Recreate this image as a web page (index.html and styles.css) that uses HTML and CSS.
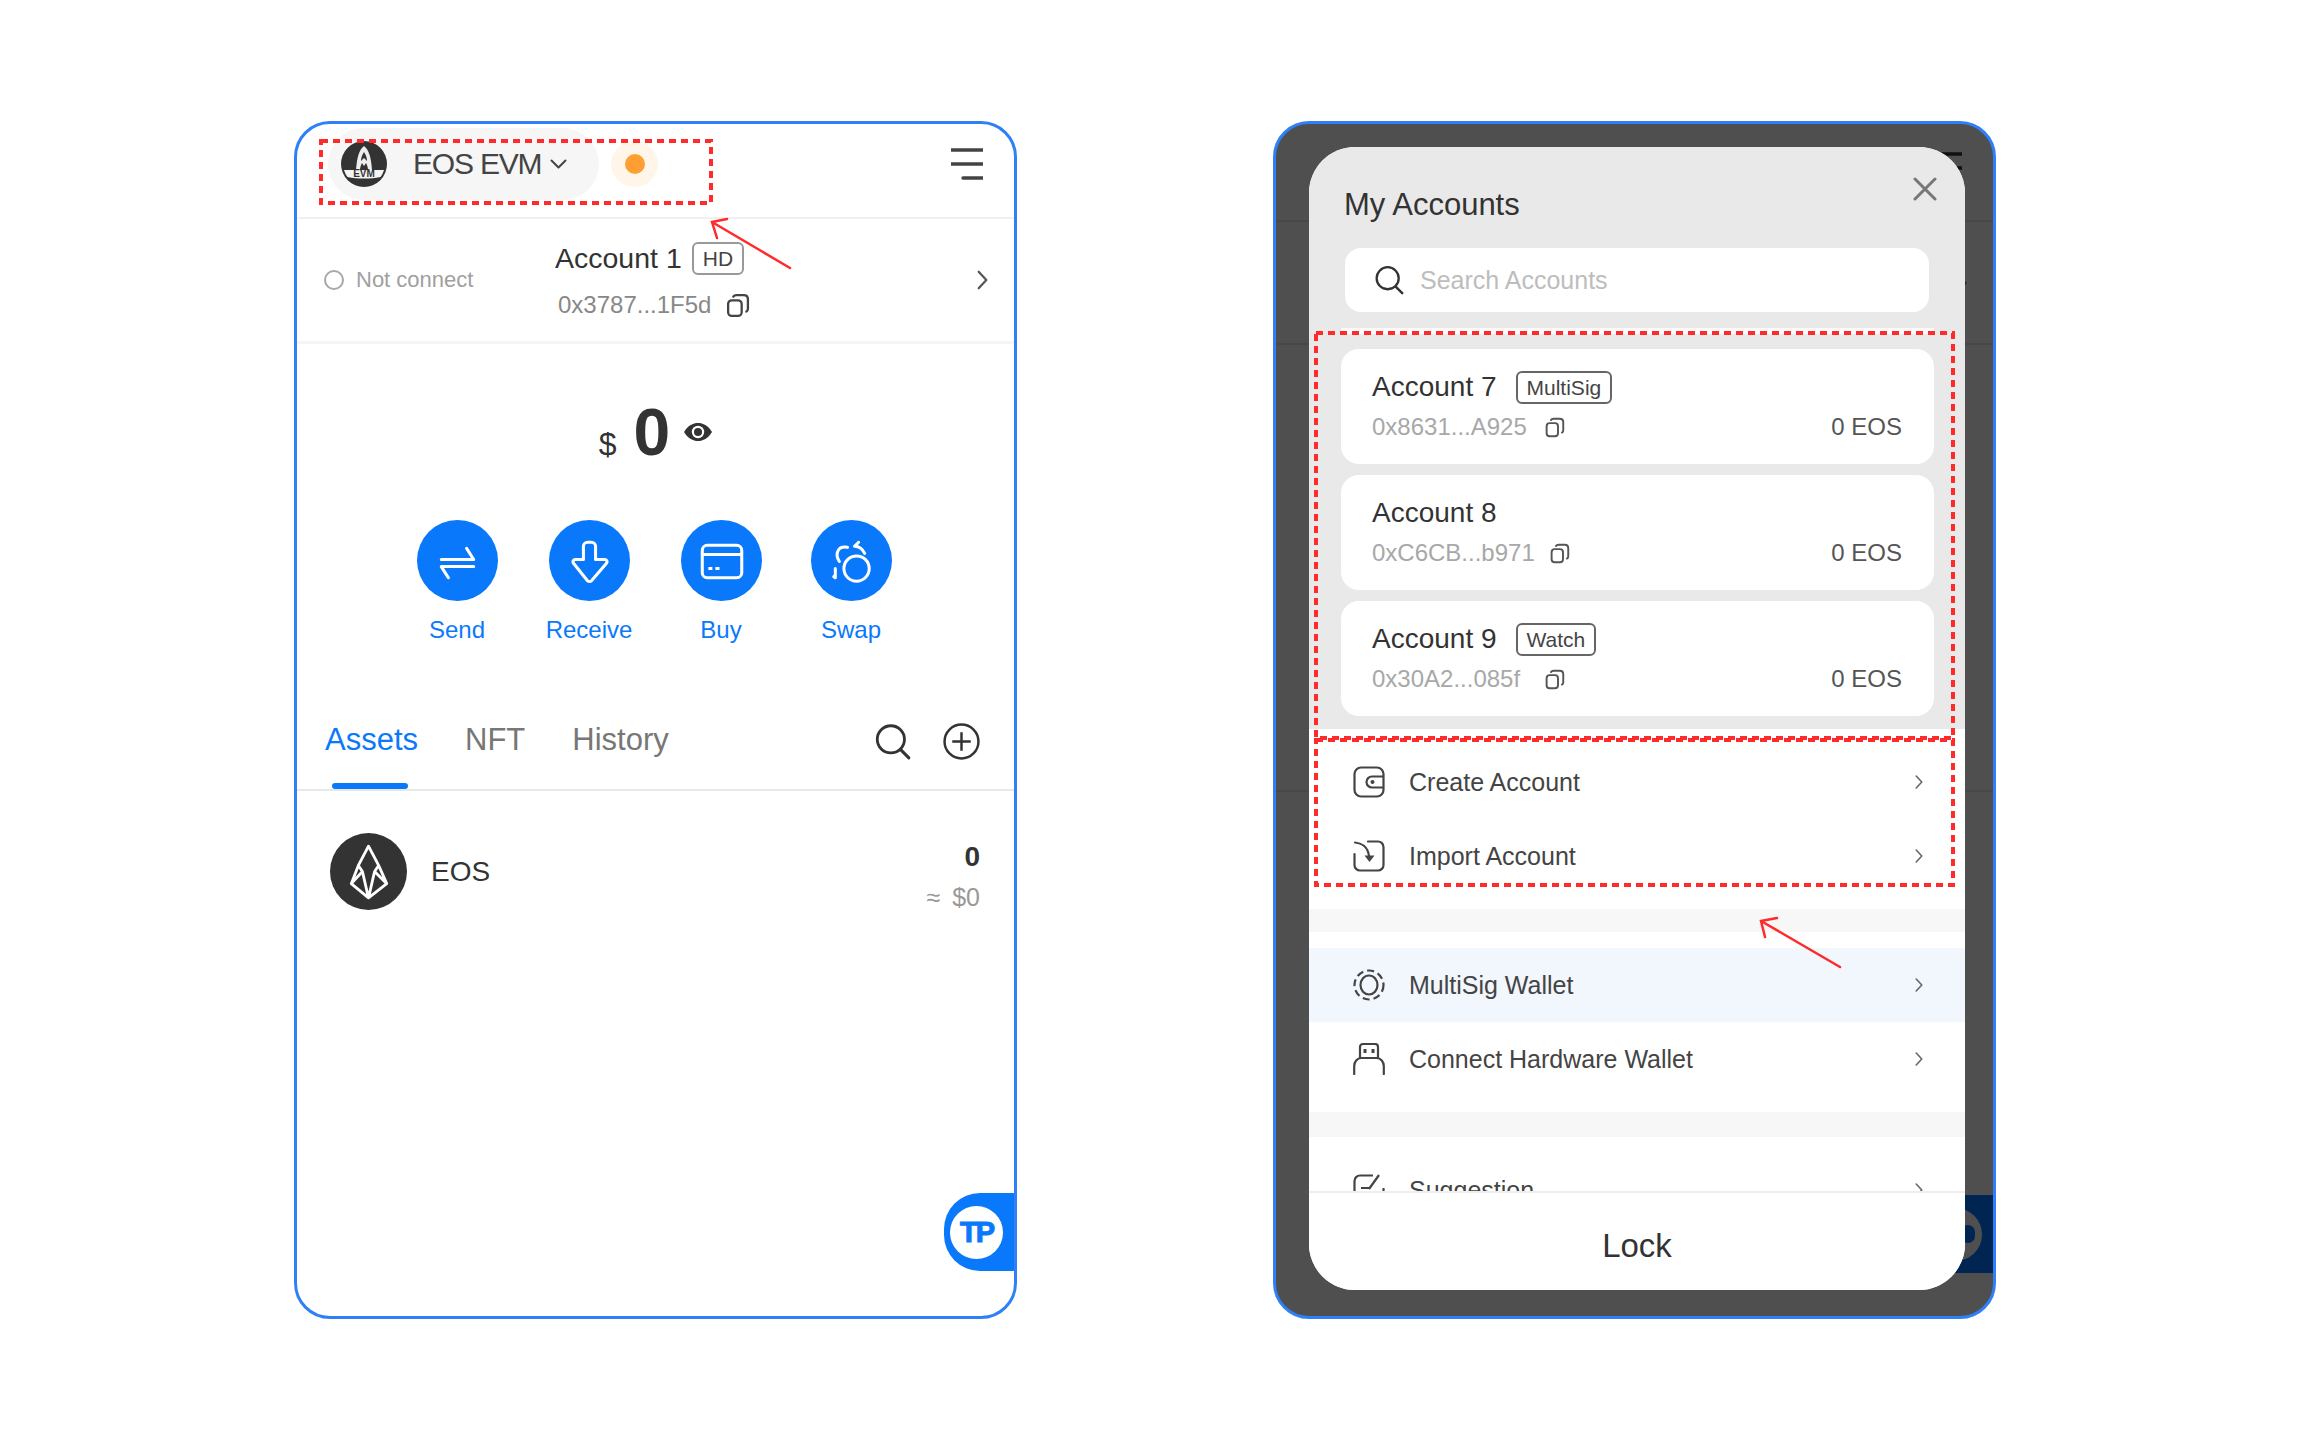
FILE: index.html
```html
<!DOCTYPE html>
<html lang="en">
<head>
  <meta charset="UTF-8">
  <title>EOS EVM wallet</title>
  <link rel="stylesheet" href="styles.css">
</head>
<body>
  <svg class="sprites" width="0" height="0">
    <symbol id="i-copy" viewBox="0 0 24 24">
      <rect x="3" y="7" width="13" height="15" rx="3.5" fill="none" stroke="currentColor" stroke-width="2.2"/>
      <path d="M8 3.5C8.6 2.4 9.6 2 11 2h7c2.4 0 4 1.6 4 4v9c0 1.2-.5 2.2-1.5 2.8" fill="none" stroke="currentColor" stroke-width="2.2" stroke-linecap="round"/>
    </symbol>
    <symbol id="i-chev" viewBox="0 0 10 18">
      <path d="M1.5 1.5 8.5 9l-7 7.5" fill="none" stroke="currentColor" stroke-width="2" stroke-linecap="round" stroke-linejoin="round"/>
    </symbol>
    <symbol id="i-search" viewBox="0 0 34 34">
      <circle cx="15.5" cy="15" r="12.5" fill="none" stroke="currentColor" stroke-width="2.6"/>
      <path d="M24.5 24.5 32 32" fill="none" stroke="currentColor" stroke-width="2.8" stroke-linecap="round"/>
    </symbol>
  </svg>

  <div class="page">
    <!-- wallet home -->
    <div class="phone">
      <div class="topbar">
        <div class="chain-pill">
          <svg class="chain-logo" viewBox="0 0 46 46">
            <circle cx="23" cy="23" r="23" fill="#333"/>
            <path d="M3 29h40c-1 3-2 5-3.500 7-5 1-11 1.500-16.500 1.500S11 37 6.500 36C5 34 4 32 3 29z" fill="#f4f4f4"/>
            <path d="M23 5c5 4 7 11 8 24H15c1-13 3-20 8-24z" fill="#eee"/>
            <path d="M23 11c2 3 3 6 3 9l-3-3-3 3c0-3 1-6 3-9zM19 29c0-3 1-5 2-7l2 3 2-3c1 2 2 4 2 7z" fill="#333"/>
            <text x="23" y="36" text-anchor="middle" class="chain-logo-text">EVM</text>
          </svg>
          <span class="chain-name">EOS EVM</span>
          <svg class="chain-caret" viewBox="0 0 17 10"><path d="M1.500 1.500 8.500 8.500l7-7" fill="none" stroke="#444" stroke-width="2" stroke-linecap="round" stroke-linejoin="round"/></svg>
        </div>
        <div class="net-status"><span class="net-dot"></span></div>
        <svg class="menu-btn" viewBox="0 0 32 32">
          <path d="M0 2h32M0 16h32M12 30h20" stroke="#444" stroke-width="3.400" stroke-linecap="round"/>
        </svg>
      </div>

      <div class="account-bar">
        <div class="connect-status">
          <span class="connect-ring"></span>
          <span>Not connect</span>
        </div>
        <div class="account-info">
          <div class="account-title">
            <span>Account 1</span>
            <span class="tag tag-hd">HD</span>
          </div>
          <div class="account-addr">
            <span>0x3787...1F5d</span>
            <svg class="copy-big"><use href="#i-copy"/></svg>
          </div>
        </div>
        <svg class="account-chev"><use href="#i-chev"/></svg>
      </div>

      <div class="balance">
        <span class="balance-cur">$</span>
        <span class="balance-num">0</span>
        <svg class="balance-eye" viewBox="0 0 28 18">
          <path d="M0 9C4 2.500 9 0 14 0s10 2.500 14 9c-4 6.500-9 9-14 9S4 15.500 0 9z" fill="#333"/>
          <circle cx="14" cy="9" r="6.200" fill="#fff"/>
          <circle cx="14" cy="9" r="4" fill="#333"/>
        </svg>
      </div>

      <div class="actions">
        <div class="action">
          <div class="action-circle">
            <svg viewBox="0 0 80 80"><path d="M24 39h32l-7-11M56 46H24l7 11" fill="none" stroke="#fff" stroke-width="3" stroke-linecap="round" stroke-linejoin="round"/></svg>
          </div>
          <span>Send</span>
        </div>
        <div class="action">
          <div class="action-circle">
            <svg viewBox="0 0 80 80"><path d="M34 26a4 4 0 0 1 4-4h4a4 4 0 0 1 4 4v13h9c2 0 3 2 2 3.500L42 60c-1 1-3 1-4 0L24 42.500c-1-1.500 0-3.500 2-3.500h8z" fill="none" stroke="#fff" stroke-width="3" stroke-linejoin="round"/></svg>
          </div>
          <span>Receive</span>
        </div>
        <div class="action">
          <div class="action-circle">
            <svg viewBox="0 0 80 80">
              <rect x="21" y="25" width="39" height="32" rx="5" fill="none" stroke="#fff" stroke-width="3"/>
              <path d="M21 34h39" stroke="#fff" stroke-width="3"/>
              <path d="M27 48h4M34 48h4" stroke="#fff" stroke-width="3"/>
            </svg>
          </div>
          <span>Buy</span>
        </div>
        <div class="action action-swap">
          <div class="action-circle">
            <svg viewBox="0 0 80 80">
              <circle cx="45" cy="48" r="12.500" fill="none" stroke="#fff" stroke-width="3"/>
              <path d="M28 41C23 33 27 25 36 27M53 33c-2-4-5-7-10-7l4-4M24 48v9l-1.500-1" fill="none" stroke="#fff" stroke-width="3" stroke-linecap="round" stroke-linejoin="round"/>
            </svg>
          </div>
          <span>Swap</span>
        </div>
      </div>

      <div class="tabs">
        <span class="tab tab-active">Assets</span>
        <span class="tab">NFT</span>
        <span class="tab">History</span>
        <div class="tab-tools">
          <svg class="tool-search"><use href="#i-search"/></svg>
          <svg class="tool-plus" viewBox="0 0 36 36">
            <circle cx="18" cy="18" r="16.500" fill="none" stroke="#333" stroke-width="2.400"/>
            <path d="M18 9v18M9 18h18" stroke="#333" stroke-width="2.400"/>
          </svg>
        </div>
      </div>

      <div class="token">
        <svg class="token-logo" viewBox="0 0 76 76">
          <circle cx="38" cy="38" r="38" fill="#333"/>
          <path d="M38 13l10 19 8 18-18 14-17-14 7-18zM21 50l11-12 6 26 6-26 12 12M28 32l4 6M48 32l-4 6" fill="none" stroke="#fff" stroke-width="2.800" stroke-linejoin="round"/>
        </svg>
        <span class="token-name">EOS</span>
        <div class="token-amount">
          <span class="token-qty">0</span>
          <span class="token-fiat">≈ $0</span>
        </div>
      </div>

      <div class="tp-badge"><span class="tp-circle">TP</span></div>
    </div>

    <!-- accounts drawer over the dimmed home screen -->
    <div class="phone phone-dim">
      <div class="dim-top">
        <svg class="dim-menu" viewBox="0 0 32 32">
          <path d="M0 2h32M0 16h32" stroke="#111" stroke-width="3.400"/>
        </svg>
      </div>
      <div class="dim-account">
        <svg class="dim-chev"><use href="#i-chev"/></svg>
      </div>
      <div class="dim-body"></div>
      <div class="dim-badge"><span class="dim-badge-circle"><span class="dim-badge-mark"></span></span></div>

      <div class="drawer">
        <div class="drawer-top">
          <div class="drawer-title">My Accounts</div>
          <svg class="drawer-close" viewBox="0 0 24 24"><path d="M2 2l20 20M22 2 2 22" stroke="#777" stroke-width="3" stroke-linecap="round"/></svg>
          <div class="search-box">
            <svg class="search-icon"><use href="#i-search"/></svg>
            <span>Search Accounts</span>
          </div>
          <div class="card-sliver"></div>
          <div class="cards">
            <div class="card">
              <div class="card-title">
                <span>Account 7</span>
                <span class="tag">MultiSig</span>
              </div>
              <div class="card-line">
                <span class="card-addr">0x8631...A925</span>
                <svg class="copy-small"><use href="#i-copy"/></svg>
                <span class="card-bal">0 EOS</span>
              </div>
            </div>
            <div class="card">
              <div class="card-title">
                <span>Account 8</span>
              </div>
              <div class="card-line">
                <span class="card-addr">0xC6CB...b971</span>
                <svg class="copy-small"><use href="#i-copy"/></svg>
                <span class="card-bal">0 EOS</span>
              </div>
            </div>
            <div class="card">
              <div class="card-title">
                <span>Account 9</span>
                <span class="tag">Watch</span>
              </div>
              <div class="card-line">
                <span class="card-addr">0x30A2...085f</span>
                <svg class="copy-small"><use href="#i-copy"/></svg>
                <span class="card-bal">0 EOS</span>
              </div>
            </div>
          </div>
        </div>

        <div class="drawer-list">
          <div class="menu-group">
            <div class="menu-row">
              <svg class="menu-icon" viewBox="0 0 32 32">
                <rect x="1.500" y="1.500" width="29" height="29" rx="6.500" fill="none" stroke="#444" stroke-width="2.200"/>
                <path d="M30 10.500H19a5.500 5.500 0 0 0 0 11h11" fill="none" stroke="#444" stroke-width="2.200"/>
                <circle cx="19.500" cy="16" r="2" fill="#444"/>
              </svg>
              <span>Create Account</span>
              <svg class="menu-chev"><use href="#i-chev"/></svg>
            </div>
            <div class="menu-row">
              <svg class="menu-icon" viewBox="0 0 32 32">
                <path d="M1.500 14v11a5.500 5.500 0 0 0 5.500 5.500h18a5.500 5.500 0 0 0 5.500-5.500V7A5.500 5.500 0 0 0 25 1.500H15" fill="none" stroke="#444" stroke-width="2.200" stroke-linecap="round"/>
                <path d="M2 2.500c6 .5 13 4 14 14" fill="none" stroke="#444" stroke-width="2.200" stroke-linecap="round"/>
                <path d="M16.500 22l-5-6.500h10z" fill="#444"/>
              </svg>
              <span>Import Account</span>
              <svg class="menu-chev"><use href="#i-chev"/></svg>
            </div>
          </div>
          <div class="menu-strip"></div>
          <div class="menu-group">
            <div class="menu-row menu-row-hl">
              <svg class="menu-icon" viewBox="0 0 32 32">
                <circle cx="16" cy="16" r="14.500" fill="none" stroke="#444" stroke-width="2.200" stroke-dasharray="7 4"/>
                <ellipse cx="16" cy="16" rx="8.500" ry="9.500" fill="none" stroke="#444" stroke-width="2.200"/>
              </svg>
              <span>MultiSig Wallet</span>
              <svg class="menu-chev"><use href="#i-chev"/></svg>
            </div>
            <div class="menu-row">
              <svg class="menu-icon" viewBox="0 0 32 32">
                <path d="M7 15V4a3 3 0 0 1 3-3h12a3 3 0 0 1 3 3v11" fill="none" stroke="#444" stroke-width="2.200"/>
                <path d="M1.200 31V23c0-4 3-8 7-8h15.600c4 0 7 4 7 8v8" fill="none" stroke="#444" stroke-width="2.200" stroke-linecap="round"/>
                <path d="M12 6v4M20 6v4" stroke="#444" stroke-width="3"/>
              </svg>
              <span>Connect Hardware Wallet</span>
              <svg class="menu-chev"><use href="#i-chev"/></svg>
            </div>
          </div>
          <div class="menu-strip menu-strip-low"></div>
          <div class="menu-row">
            <svg class="menu-icon" viewBox="0 0 32 32">
              <path d="M20 1.500H7A5.500 5.500 0 0 0 1.500 7v18A5.500 5.500 0 0 0 7 30.500h18a5.500 5.500 0 0 0 5.500-5.500V14" fill="none" stroke="#444" stroke-width="2.200"/>
              <path d="M8 14h9M16 15 26 1" fill="none" stroke="#444" stroke-width="2.200"/>
            </svg>
            <span>Suggestion</span>
            <svg class="menu-chev"><use href="#i-chev"/></svg>
          </div>
        </div>

        <div class="drawer-foot">Lock</div>
      </div>
    </div>

    <!-- red notes drawn on top of the screenshots -->
    <svg class="notes" viewBox="0 0 2300 1453">
      <g fill="none" stroke="#ff2a2a" stroke-width="4" stroke-dasharray="7 5">
        <rect x="321" y="141" width="390" height="62"/>
        <rect x="1316" y="333" width="637" height="405"/>
        <rect x="1316" y="740" width="637" height="145"/>
      </g>
      <g fill="none" stroke="#ff2a2a" stroke-width="2.500" stroke-linecap="round">
        <path d="M790 268 712 222M727 219 712 222 717 238"/>
        <path d="M1840 967 1761 921M1777 918 1761 921 1765 937"/>
      </g>
    </svg>
  </div>
</body>
</html>
```

FILE: styles.css
```css
* {
  box-sizing: border-box;
}

body {
  margin: 0;
  background: #fff;
  font-family: "Liberation Sans", Arial, sans-serif;
  color: #333;
}

.sprites {
  position: absolute;
}

.page {
  position: relative;
  display: flex;
  gap: 256px;
  width: 2300px;
  height: 1453px;
  padding: 121px 0 0 294px;
  overflow: hidden;
}

.phone {
  position: relative;
  flex: none;
  width: 723px;
  height: 1198px;
  border: 3px solid #2f80f8;
  border-radius: 36px;
  background: #fff;
  overflow: hidden;
}

.notes {
  position: absolute;
  left: 0;
  top: 0;
  z-index: 5;
  width: 2300px;
  height: 1453px;
  pointer-events: none;
}

/* header */
.topbar {
  display: flex;
  align-items: flex-start;
  height: 95px;
  padding: 4px 31px 0 31px;
  border-bottom: 2px solid #f0f0f0;
}

.chain-pill {
  display: flex;
  align-items: center;
  width: 271px;
  height: 72px;
  padding-left: 13px;
  border-radius: 36px;
  background: #f6f6f6;
}

.chain-logo {
  width: 46px;
  height: 46px;
}

.chain-logo-text {
  font-size: 10px;
  font-weight: 700;
  fill: #333;
}

.chain-name {
  margin-left: 26px;
  font-size: 30px;
  letter-spacing: -1.200px;
  color: #444;
}

.chain-caret {
  width: 17px;
  height: 10px;
  margin-left: 9px;
}

.net-status {
  display: flex;
  align-items: center;
  justify-content: center;
  width: 47px;
  height: 46px;
  margin: 13px 0 0 12px;
  border-radius: 50%;
  background: #fff5e9;
}

.net-dot {
  width: 20px;
  height: 20px;
  border-radius: 50%;
  background: #ff9f33;
}

.menu-btn {
  width: 32px;
  height: 32px;
  margin: 20px 0 0 auto;
}

/* account */
.account-bar {
  display: flex;
  align-items: center;
  height: 125px;
  padding: 0 26px 0 27px;
  border-bottom: 3px solid #f5f5f5;
}

.connect-status {
  display: flex;
  align-items: center;
  gap: 12px;
  width: 231px;
  font-size: 22px;
  color: #a0a0a0;
}

.connect-ring {
  width: 20px;
  height: 20px;
  border: 2px solid #a8a8a8;
  border-radius: 50%;
}

.account-title {
  display: flex;
  align-items: center;
  gap: 10px;
  height: 34px;
  font-size: 28.500px;
  color: #333;
}

.account-addr {
  display: flex;
  align-items: center;
  gap: 14px;
  margin-top: 16px;
  padding-left: 3px;
  font-size: 24px;
  color: #888;
}

.copy-big {
  width: 25px;
  height: 25px;
  color: #444;
}

.account-chev {
  width: 11px;
  height: 22px;
  margin-left: auto;
  color: #555;
}

.tag {
  padding: 0 9px;
  height: 33px;
  line-height: 29px;
  border: 2px solid #666;
  border-radius: 6px;
  font-size: 21px;
  color: #444;
}

.tag-hd {
  border-color: #999;
}

/* balance */
.balance {
  display: flex;
  align-items: baseline;
  justify-content: center;
  height: 176px;
  padding-top: 55px;
  color: #333;
}

.balance-cur {
  margin-right: 17px;
  font-size: 32px;
}

.balance-num {
  font-size: 66px;
  font-weight: 700;
  line-height: 1;
}

.balance-eye {
  align-self: flex-start;
  width: 28px;
  height: 18px;
  margin: 24px 0 0 14px;
}

/* action buttons */
.actions {
  display: flex;
  padding-left: 94px;
}

.action {
  display: flex;
  flex-direction: column;
  align-items: center;
  width: 132px;
  font-size: 24px;
  line-height: 28px;
  color: #0b79fb;
}

.action-swap {
  margin-left: -2px;
}

.action-circle {
  width: 81px;
  height: 81px;
  margin-bottom: 15px;
  border-radius: 50%;
  background: #0a78fb;
}

.action-circle svg {
  display: block;
  width: 81px;
  height: 81px;
}

/* tabs */
.tabs {
  position: relative;
  display: flex;
  align-items: flex-start;
  gap: 47px;
  height: 90px;
  margin-top: 57px;
  padding: 22px 34px 0 28px;
  border-bottom: 2px solid #e8e8e8;
  font-size: 31px;
  line-height: 34px;
  color: #777;
}

.tab {
  position: relative;
}

.tab-active {
  color: #0b79fb;
}

.tab-active::after {
  content: "";
  position: absolute;
  left: 7px;
  top: 60px;
  width: 76px;
  height: 6px;
  border-radius: 3px;
  background: #0a78fb;
}

.tab-tools {
  display: flex;
  align-items: center;
  gap: 32px;
  margin-left: auto;
}

.tool-search {
  width: 37px;
  height: 37px;
  color: #333;
}

.tool-plus {
  width: 37px;
  height: 37px;
}

/* token list */
.token {
  display: flex;
  align-items: center;
  gap: 24px;
  margin-top: 41px;
  padding: 0 34px 0 33px;
}

.token-logo {
  width: 77px;
  height: 77px;
}

.token-name {
  font-size: 28px;
  color: #333;
}

.token-amount {
  display: flex;
  flex-direction: column;
  align-items: flex-end;
  gap: 12px;
  align-self: flex-start;
  margin: 11px 0 0 auto;
  line-height: 28px;
}

.token-qty {
  font-size: 28px;
  font-weight: 700;
}

.token-fiat {
  font-size: 25px;
  word-spacing: 5px;
  color: #999;
}

.tp-badge {
  position: absolute;
  right: 0;
  top: 1069px;
  display: flex;
  align-items: center;
  width: 70px;
  height: 78px;
  padding-left: 6px;
  border-radius: 36px 0 0 36px;
  background: #0a78fb;
}

.tp-circle {
  display: flex;
  align-items: center;
  justify-content: center;
  width: 53px;
  height: 53px;
  border-radius: 50%;
  background: #fff;
  font-size: 29px;
  font-weight: 700;
  letter-spacing: -2px;
  color: #0a78fb;
  -webkit-text-stroke: 1px #0a78fb;
}

/* what shows of the home screen behind the drawer */
.phone-dim {
  background: #4f4f4f;
}

.dim-top {
  display: flex;
  justify-content: flex-end;
  height: 98px;
  padding: 28px 31px 0 0;
  border-bottom: 2px solid #484848;
}

.dim-menu {
  width: 32px;
  height: 32px;
}

.dim-account {
  display: flex;
  align-items: center;
  justify-content: flex-end;
  height: 123px;
  padding-right: 26px;
  border-bottom: 2px solid #484848;
}

.dim-chev {
  width: 11px;
  height: 22px;
  color: #222;
}

.dim-body {
  height: 447px;
  border-bottom: 2px solid #484848;
}

.dim-badge {
  position: absolute;
  right: 0;
  top: 1071px;
  display: flex;
  align-items: center;
  width: 70px;
  height: 78px;
  padding-left: 6px;
  background: #012553;
}

.dim-badge-circle {
  display: flex;
  align-items: center;
  justify-content: flex-end;
  width: 53px;
  height: 53px;
  padding-right: 7px;
  border-radius: 50%;
  background: #4f4f4f;
}

.dim-badge-mark {
  width: 14px;
  height: 18px;
  border-radius: 7px;
  background: #012553;
}

/* drawer */
.drawer {
  position: absolute;
  left: 33px;
  top: 23px;
  display: flex;
  flex-direction: column;
  width: 656px;
  height: 1143px;
  border-radius: 46px;
  background: #fff;
  overflow: hidden;
}

.drawer-top {
  position: relative;
  flex: none;
  height: 582px;
  padding-top: 40px;
  background: #e9e9e9;
}

.drawer-title {
  padding-left: 35px;
  font-size: 31px;
  line-height: 36px;
  color: #333;
}

.drawer-close {
  position: absolute;
  right: 28px;
  top: 30px;
  width: 24px;
  height: 24px;
}

.search-box {
  display: flex;
  align-items: center;
  gap: 16px;
  height: 64px;
  margin: 25px 36px 0;
  padding-left: 29px;
  border-radius: 16px;
  background: #fff;
  font-size: 25px;
  color: #bdbdbd;
}

.search-icon {
  width: 30px;
  height: 30px;
  color: #333;
}

.card-sliver {
  height: 6px;
  margin: 16px 31px 15px 32px;
  background: #fafafa;
}

.cards {
  display: flex;
  flex-direction: column;
  gap: 11px;
  margin: 0 31px 0 32px;
}

.card {
  height: 115px;
  padding: 23px 32px 0 31px;
  border-radius: 18px;
  background: #fff;
}

.card-title {
  display: flex;
  align-items: center;
  gap: 19px;
  height: 30px;
  font-size: 28px;
  color: #333;
}

.card-line {
  display: flex;
  align-items: center;
  gap: 14px;
  height: 30px;
  margin-top: 10px;
  font-size: 24px;
}

.card-addr {
  min-width: 158px;
  color: #a8a8a8;
}

.copy-small {
  width: 21px;
  height: 21px;
  color: #555;
}

.card-bal {
  margin-left: auto;
  color: #555;
}

/* menu rows */
.drawer-list {
  flex: 1;
  min-height: 0;
  overflow: hidden;
}

.menu-group {
  padding: 16px 0;
}

.menu-row {
  display: flex;
  align-items: center;
  gap: 24px;
  height: 74px;
  padding: 0 42px 0 44px;
  font-size: 25px;
  color: #444;
}

.menu-row-hl {
  background: #f2f6fd;
}

.menu-icon {
  flex: none;
  width: 32px;
  height: 32px;
}

.menu-chev {
  width: 8px;
  height: 16px;
  margin-left: auto;
  color: #666;
}

.menu-strip {
  height: 23px;
  background: #f7f7f7;
}

.menu-strip-low {
  height: 25px;
  margin-bottom: 16px;
}

.drawer-foot {
  flex: none;
  height: 99px;
  border-top: 2px solid #eee;
  background: #fff;
  font-size: 33px;
  line-height: 106px;
  text-align: center;
  color: #333;
}
```
